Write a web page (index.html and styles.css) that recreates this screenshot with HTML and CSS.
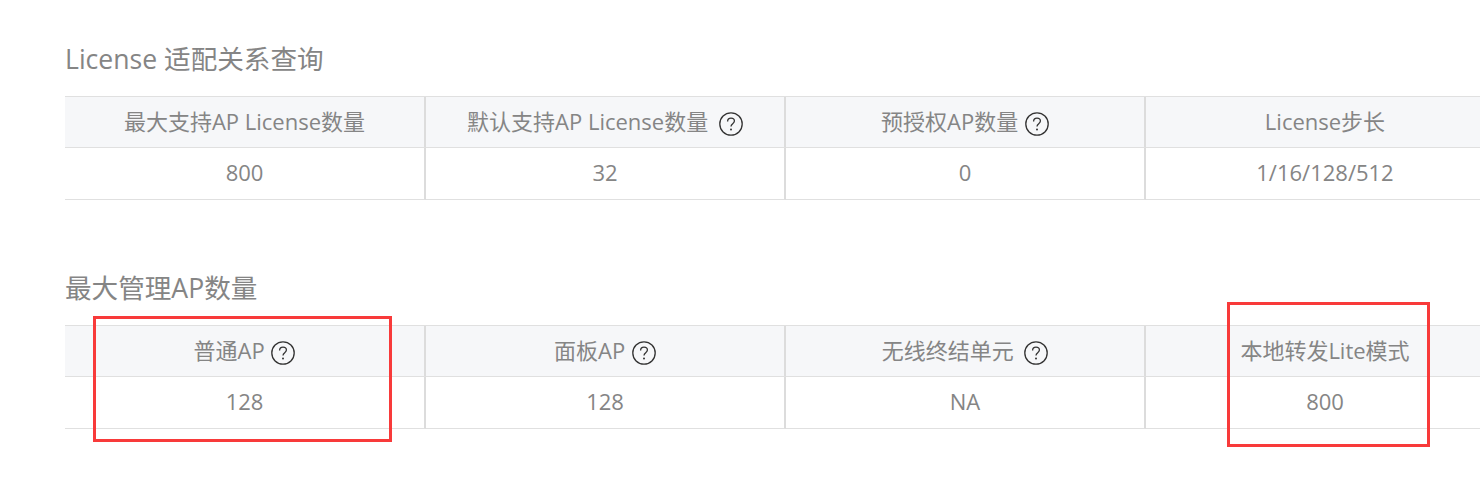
FILE: index.html
```html
<!DOCTYPE html>
<html lang="zh-CN">
<head>
<meta charset="utf-8">
<title>License 适配关系查询</title>
<link rel="stylesheet" href="styles.css">
</head>
<body>
<main class="page">
  <section class="block">
    <h2 class="title">License 适配关系查询</h2>
    <div class="grid">
      <div class="cell head">最大支持AP License数量</div>
      <div class="cell head">默认支持AP License数量 <svg class="help" viewBox="0 0 24 24"><circle cx="12" cy="12" r="11.2"/><path d="M8.6 9.4c0-2 1.5-3.3 3.4-3.3s3.4 1.2 3.4 3c0 2.6-3.4 2.7-3.4 5.4"/><circle class="dot" cx="12" cy="17.6" r="1"/></svg></div>
      <div class="cell head">预授权AP数量 <svg class="help tight" viewBox="0 0 24 24"><circle cx="12" cy="12" r="11.2"/><path d="M8.6 9.4c0-2 1.5-3.3 3.4-3.3s3.4 1.2 3.4 3c0 2.6-3.4 2.7-3.4 5.4"/><circle class="dot" cx="12" cy="17.6" r="1"/></svg></div>
      <div class="cell head">License步长</div>
      <div class="cell body">800</div>
      <div class="cell body">32</div>
      <div class="cell body">0</div>
      <div class="cell body">1/16/128/512</div>
    </div>
  </section>
  <section class="block second">
    <h2 class="title">最大管理AP数量</h2>
    <div class="grid">
      <div class="cell head">普通AP <svg class="help tight" viewBox="0 0 24 24"><circle cx="12" cy="12" r="11.2"/><path d="M8.6 9.4c0-2 1.5-3.3 3.4-3.3s3.4 1.2 3.4 3c0 2.6-3.4 2.7-3.4 5.4"/><circle class="dot" cx="12" cy="17.6" r="1"/></svg></div>
      <div class="cell head">面板AP <svg class="help tight" viewBox="0 0 24 24"><circle cx="12" cy="12" r="11.2"/><path d="M8.6 9.4c0-2 1.5-3.3 3.4-3.3s3.4 1.2 3.4 3c0 2.6-3.4 2.7-3.4 5.4"/><circle class="dot" cx="12" cy="17.6" r="1"/></svg></div>
      <div class="cell head">无线终结单元 <svg class="help" viewBox="0 0 24 24"><circle cx="12" cy="12" r="11.2"/><path d="M8.6 9.4c0-2 1.5-3.3 3.4-3.3s3.4 1.2 3.4 3c0 2.6-3.4 2.7-3.4 5.4"/><circle class="dot" cx="12" cy="17.6" r="1"/></svg></div>
      <div class="cell head">本地转发Lite模式</div>
      <div class="cell body">128</div>
      <div class="cell body">128</div>
      <div class="cell body">NA</div>
      <div class="cell body">800</div>
    </div>
  </section>
  <div class="mark mark-a"></div>
  <div class="mark mark-b"></div>
</main>
</body>
</html>
```
FILE: styles.css
```css
* { box-sizing: border-box; }
html, body { margin: 0; padding: 0; background: #fff; }
body {
  width: 1480px;
  height: 493px;
  overflow: hidden;
  font-family: "Open Sans", "Noto Sans CJK SC", sans-serif;
  color: #858585;
}
.page {
  position: relative;
  height: 493px;
  padding: 41px 0 0 65px;
}
.block.second { margin-top: 70px; }
.title {
  margin: 0 0 19px;
  height: 36px;
  font-size: 26.6px;
  line-height: 36px;
  font-weight: 400;
}
.grid {
  display: grid;
  grid-template-columns: 361px repeat(3, 360px);
  width: 1441px;
  border-top: 1px solid #e0e0e0;
}
.cell {
  display: flex;
  align-items: center;
  justify-content: center;
  height: 51px;
  padding-bottom: 4px;
  font-size: 22px;
  white-space: pre-wrap;
  border-bottom: 1px solid #e0e0e0;
  border-right: 2px solid #dcdcdc;
}
.cell.body { height: 52px; }
.cell.head {
  background: #f6f7f9;
}
.help {
  width: 24px;
  height: 24px;
  margin: 8px 0 0 5px;
  flex: none;
  fill: none;
  stroke: #333;
  stroke-width: 1.3;
}
.help.tight { margin-left: 1px; }
.help .dot { fill: #333; stroke: none; }
.mark {
  position: absolute;
  border: 3px solid #f83a3a;
}
.mark-a { left: 93px; top: 316px; width: 299px; height: 126px; }
.mark-b { left: 1227px; top: 302px; width: 203px; height: 145px; }
```
